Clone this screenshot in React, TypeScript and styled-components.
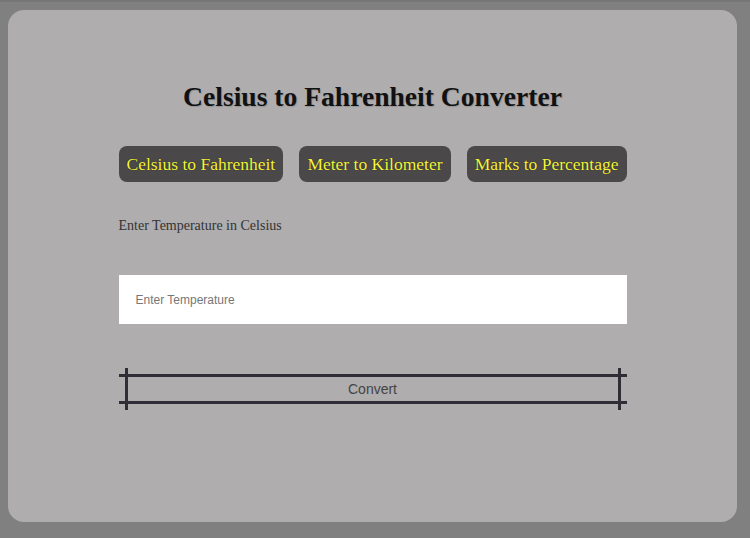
import React, { useState } from 'react';
import styled, { createGlobalStyle } from 'styled-components';

const GlobalStyle = createGlobalStyle`
	html, body {
		margin: 0;
		padding: 0;
	}
	body {
		background: #808080;
		border-top: 2px solid #767676;
		font-family: 'Liberation Serif', 'Times New Roman', serif;
	}
`;

const Page = styled.div`
	width: 750px;
	height: 536px;
	padding: 8px 13px 16px 8px;
	box-sizing: border-box;
`;

const Panel = styled.div`
	height: 100%;
	background: #afadae;
	border-radius: 16px;
	display: flex;
	flex-direction: column;
	align-items: center;
	padding-top: 72px;
	box-sizing: border-box;
`;

const Title = styled.h1`
	margin: 0 0 34px;
	font-size: 27.6px;
	line-height: 30px;
	font-weight: bold;
	color: #111;
	text-shadow: 1px 1px 1px rgba(0, 0, 0, 0.15);
`;

const Body = styled.div`
	width: 508px;
	display: flex;
	flex-direction: column;
`;

const Tabs = styled.div`
	display: flex;
	justify-content: space-between;
`;

const Tab = styled.button<{ $active?: boolean }>`
	height: 36px;
	padding: 0 8px;
	border: none;
	border-radius: 8px;
	background: #4a4849;
	color: #f4f43a;
	font-family: 'Liberation Serif', 'Times New Roman', serif;
	font-size: 17.5px;
	text-shadow: 0 0 1px rgba(0, 0, 0, 0.7);
	cursor: pointer;
`;

const Label = styled.p`
	margin: 35px 0 0;
	font-size: 14px;
	line-height: 18px;
	color: #333;
`;

const Input = styled.input`
	margin-top: 40px;
	height: 49px;
	padding: 0 17px;
	border: none;
	background: #fff;
	font-family: 'Liberation Sans', Arial, sans-serif;
	font-size: 12px;
	color: #333;
	outline: none;
	&::placeholder {
		color: #777;
	}
`;

const ConvertButton = styled.button`
	position: relative;
	margin-top: 50px;
	height: 30px;
	border: none;
	border-top: 3px solid #2f2e36;
	border-bottom: 3px solid #2f2e36;
	background: transparent;
	font-family: 'Liberation Sans', Arial, sans-serif;
	font-size: 14px;
	color: #444;
	cursor: pointer;
	&::before {
		content: '';
		position: absolute;
		left: 6px;
		right: 6px;
		top: -9px;
		bottom: -9px;
		border-left: 3px solid #2f2e36;
		border-right: 3px solid #2f2e36;
	}
`;

export default function App() {
	const [value, setValue] = useState('');

	return (
		<>
			<GlobalStyle />
			<Page>
				<Panel>
					<Title>Celsius to Fahrenheit Converter</Title>
					<Body>
						<Tabs>
							<Tab $active>Celsius to Fahrenheit</Tab>
							<Tab>Meter to Kilometer</Tab>
							<Tab>Marks to Percentage</Tab>
						</Tabs>
						<Label>Enter Temperature in Celsius</Label>
						<Input placeholder="Enter Temperature" value={value} onChange={(e) => setValue(e.target.value)} />
						<ConvertButton>Convert</ConvertButton>
					</Body>
				</Panel>
			</Page>
		</>
	);
}
